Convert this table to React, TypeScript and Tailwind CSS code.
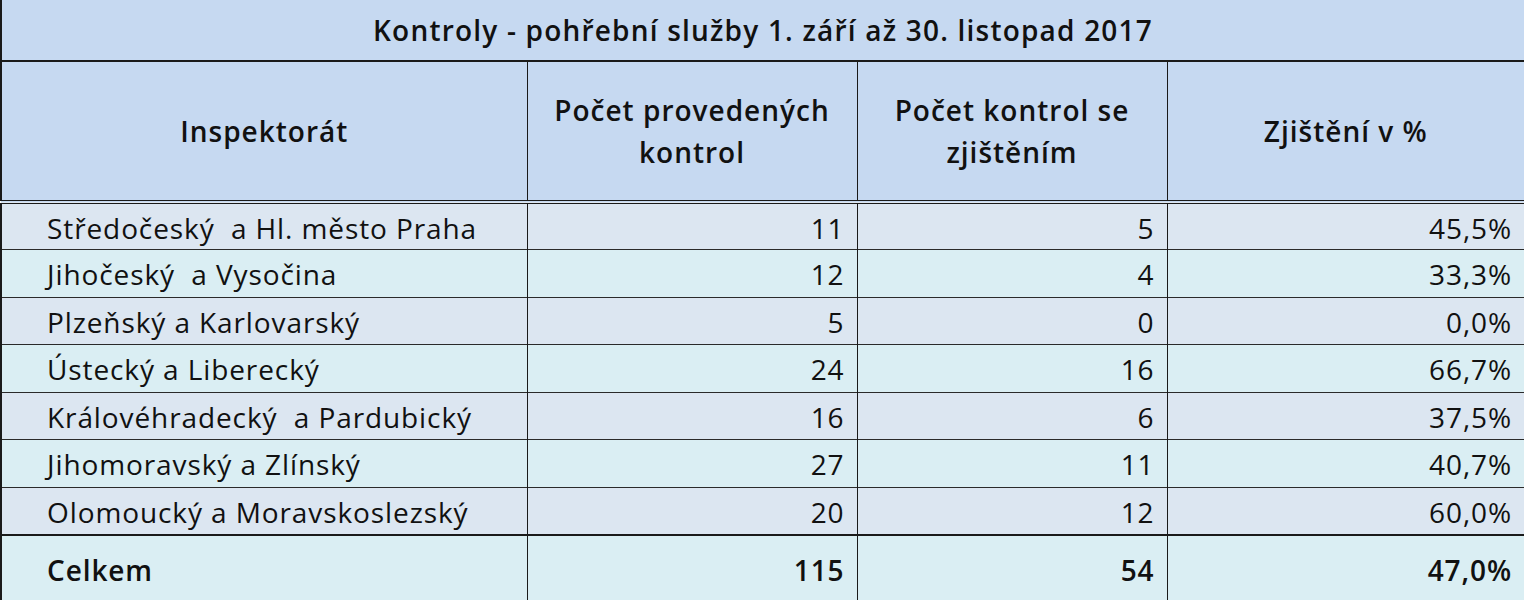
import React from 'react';

type Row = { name: string; total: number; found: number; pct: string };

const rows: Row[] = [
  { name: 'Středočeský  a Hl. město Praha', total: 11, found: 5, pct: '45,5%' },
  { name: 'Jihočeský  a Vysočina', total: 12, found: 4, pct: '33,3%' },
  { name: 'Plzeňský a Karlovarský', total: 5, found: 0, pct: '0,0%' },
  { name: 'Ústecký a Liberecký', total: 24, found: 16, pct: '66,7%' },
  { name: 'Královéhradecký  a Pardubický', total: 16, found: 6, pct: '37,5%' },
  { name: 'Jihomoravský a Zlínský', total: 27, found: 11, pct: '40,7%' },
  { name: 'Olomoucký a Moravskoslezský', total: 20, found: 12, pct: '60,0%' },
];

export default function App() {
  return (
    <div className="w-[1524px] h-[600px] overflow-hidden bg-white font-['Open_Sans',sans-serif] text-[28px] tracking-[0.9px] text-[#111]">
      <table className="w-[1524px] table-fixed border-collapse border-l-2 border-r-2 border-[#1a1a1a]">
        <colgroup>
          <col className="w-[526px]" />
          <col className="w-[330px]" />
          <col className="w-[310px]" />
          <col className="w-[358px]" />
        </colgroup>
        <thead>
          <tr className="h-[61px] bg-[#c6d9f1] border-b-2 border-[#1a1a1a]">
            <th colSpan={4} className="font-semibold tracking-[1.2px] text-center align-middle">
              Kontroly - pohřební služby 1. září až 30. listopad 2017
            </th>
          </tr>
          <tr className="h-[141px] bg-[#c6d9f1] border-b-4 border-double border-[#1a1a1a]">
            <th className="font-semibold tracking-[1px] text-center border-r border-[#1a1a1a]">Inspektorát</th>
            <th className="font-semibold tracking-[1px] text-center leading-[42px] border-r border-[#1a1a1a]">
              Počet provedených
              <br />
              kontrol
            </th>
            <th className="font-semibold tracking-[1px] text-center leading-[42px] border-r border-[#1a1a1a]">
              Počet kontrol se
              <br />
              zjištěním
            </th>
            <th className="font-semibold tracking-[1px] text-center">Zjištění v %</th>
          </tr>
        </thead>
        <tbody>
          {rows.map((row, index) => (
            <tr
              key={row.name}
              className={`h-[47.5px] border-b border-[#2a2a2a] ${
                index % 2 === 0 ? 'bg-[#dce6f1]' : 'bg-[#daeef3]'
              }`}
            >
              <td className="pl-[45px] pt-[2px] whitespace-pre border-r border-[#1a1a1a]">{row.name}</td>
              <td className="pr-[12px] pt-[2px] text-right border-r border-[#1a1a1a]">{row.total}</td>
              <td className="pr-[12px] pt-[2px] text-right border-r border-[#1a1a1a]">{row.found}</td>
              <td className="pr-[12px] pt-[2px] text-right">{row.pct}</td>
            </tr>
          ))}
          <tr className="h-[70px] bg-[#daeef3] border-t-2 border-[#1a1a1a] font-semibold">
            <td className="pl-[45px] border-r border-[#1a1a1a]">Celkem</td>
            <td className="pr-[12px] text-right border-r border-[#1a1a1a]">115</td>
            <td className="pr-[12px] text-right border-r border-[#1a1a1a]">54</td>
            <td className="pr-[12px] text-right">47,0%</td>
          </tr>
        </tbody>
      </table>
    </div>
  );
}
